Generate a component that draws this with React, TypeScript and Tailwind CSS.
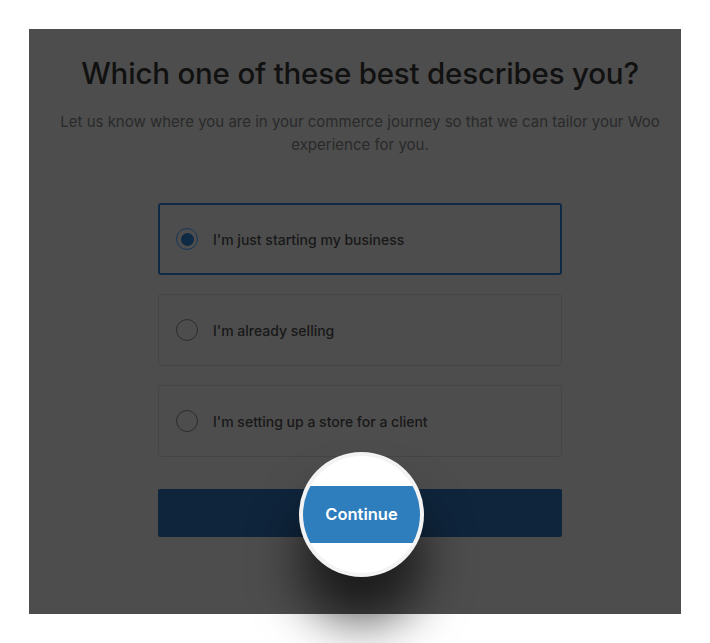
import React from "react";

type Option = {
  label: string;
  selected?: boolean;
};

const options: Option[] = [
  { label: "I'm just starting my business", selected: true },
  { label: "I'm already selling" },
  { label: "I'm setting up a store for a client" },
];

const Radio = ({ selected }: { selected?: boolean }) =>
  selected ? (
    <span className="flex h-[22px] w-[22px] items-center justify-center rounded-full border border-[#163656]">
      <span className="h-[13px] w-[13px] rounded-full bg-[#0f2a45]" />
    </span>
  ) : (
    <span className="h-[22px] w-[22px] rounded-full border border-[#2c2c2c]" />
  );

export default function App() {
  return (
    <div
      className="min-h-[643px] w-full bg-white p-[29px]"
      style={{ fontFamily: "Inter, 'Noto Sans', sans-serif" }}
    >
      <div className="relative flex h-[585px] w-[652px] flex-col items-center bg-[#4d4d4d] pt-[25px] pl-[10px]">
        <h1 className="text-[29.5px] leading-[38px] font-medium tracking-[-0.2px] text-[#111111]">
          Which one of these best describes you?
        </h1>
        <p className="mt-[18px] w-[620px] text-center text-[15px] leading-[23px] text-[#2a2a2a]">
          Let us know where you are in your commerce journey so that we can
          tailor your Woo experience for you.
        </p>

        <div className="mt-[47px] flex w-[404px] flex-col gap-[19px]">
          {options.map((opt) => (
            <div
              key={opt.label}
              className={`flex h-[72px] items-center gap-[15px] rounded-[3px] ${
                opt.selected
                  ? "border-2 border-[#0e2a45] px-[16px]"
                  : "border border-[#454545] px-[17px]"
              }`}
            >
              <Radio selected={opt.selected} />
              <span className="text-[14px] font-medium text-[#181818]">
                {opt.label}
              </span>
            </div>
          ))}
        </div>

        <button className="mt-[32px] h-[48px] w-[404px] rounded-[2px] bg-[#0f253c]" />

        {/* magnifier over the continue button */}
        <div className="absolute left-[270px] top-[423px] h-[125px] w-[125px] rounded-full bg-[#f3f3f3] p-[4px] shadow-[0_45px_50px_rgba(0,0,0,0.65)]">
          <div className="flex h-full w-full items-center overflow-hidden rounded-full bg-white">
            <div className="flex h-[57px] w-full items-center justify-center bg-[#2e7dbd]">
              <span className="text-[16.5px] font-semibold text-white">
                Continue
              </span>
            </div>
          </div>
        </div>
      </div>
    </div>
  );
}
